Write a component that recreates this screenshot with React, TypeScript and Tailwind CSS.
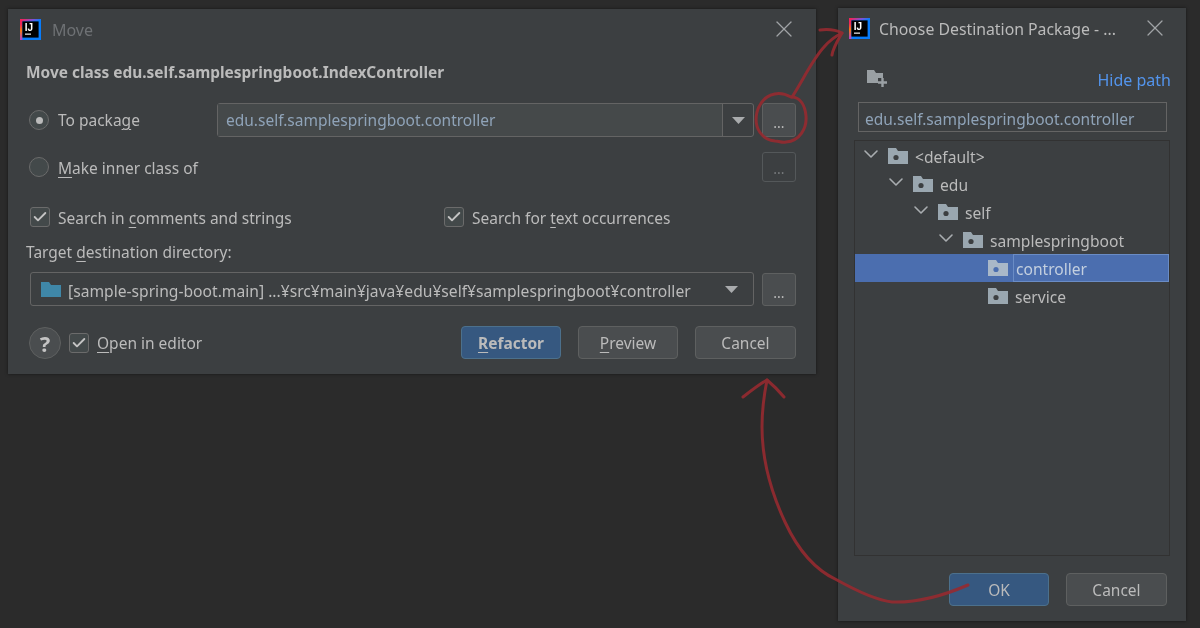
import React from "react";
import { X, ChevronDown, Check } from "lucide-react";

function Logo() {
  return (
    <svg width="21" height="21" viewBox="0 0 21 21" className="shrink-0">
      <defs>
        <linearGradient id="ij1" x1="0" y1="0" x2="1" y2="0.25">
          <stop offset="0.15" stopColor="#f0245c" />
          <stop offset="0.65" stopColor="#7a52d8" />
          <stop offset="1" stopColor="#087cfa" />
        </linearGradient>
        <linearGradient id="ij2" x1="0" y1="0" x2="0" y2="1">
          <stop offset="0.25" stopColor="#f0245c" />
          <stop offset="0.55" stopColor="#f97a12" />
          <stop offset="1" stopColor="#b43fd0" />
        </linearGradient>
      </defs>
      <rect width="21" height="21" fill="#087cfa" />
      <rect width="21" height="2.4" fill="url(#ij1)" />
      <rect width="2.4" height="21" fill="url(#ij2)" />
      <rect x="2.400" y="2.400" width="16.200" height="16.200" fill="#000" />
      <text x="4.800" y="12" fontSize="10" fontWeight="700" fill="#fff" fontFamily="Liberation Sans, sans-serif">IJ</text>
      <rect x="5" y="14.500" width="6" height="1.300" fill="#ddd" />
    </svg>
  );
}

function Mn({ children }: { children: React.ReactNode }) {
  return <span className="underline decoration-1 underline-offset-[3px]">{children}</span>;
}

function MiniBtn({ off, h, pb }: { off?: boolean; h: string; pb: string }) {
  return (
    <div
      className={`w-[34px] ${h} ${pb} shrink-0 rounded-[3px] border flex items-end justify-center text-[14px] leading-[14px] ${
        off ? "border-[#54585a] text-[#777a7c]" : "border-[#5e6060] bg-[#4a4d4f] text-[#bbbbbb]"
      }`}
    >
      ...
    </div>
  );
}

function Tick({ className }: { className?: string }) {
  return (
    <div className={`w-[20px] h-[20px] shrink-0 rounded-[3px] border border-[#6b6b6b] bg-[#43494a] flex items-center justify-center ${className ?? ""}`}>
      <Check size={16} strokeWidth={2.8} color="#c4c4c4" />
    </div>
  );
}

function Btn({ children, primary, wide }: { children: React.ReactNode; primary?: boolean; wide?: boolean }) {
  return (
    <div
      className={`h-[33px] ${wide ? "w-[101px]" : "w-[100px]"} shrink-0 rounded-[4px] border flex items-center justify-center ${
        primary ? "bg-[#365880] border-[#4c708c] text-[#bbbbbb]" : "bg-[#4a4d4f] border-[#5e6060] text-[#bbbbbb]"
      }`}
    >
      {children}
    </div>
  );
}

function Caret() {
  return (
    <svg width="13" height="7" viewBox="0 0 13 7">
      <path d="M0 0H13L6.500 7Z" fill="#a9abad" />
    </svg>
  );
}

function Pkg({ light }: { light?: boolean }) {
  const c = light ? "#a9b8c8" : "#9aa7b0";
  const d = light ? "#4b6eaf" : "#3c3f41";
  return (
    <svg width="20" height="16" viewBox="0 0 20 16" className="shrink-0">
      <path d="M0 0H8L10 3H20V16H0Z" fill={c} />
      <circle cx="8" cy="9.500" r="2.600" fill={d} />
    </svg>
  );
}

function FolderBlue() {
  return (
    <svg width="20" height="15" viewBox="0 0 20 15" className="shrink-0">
      <path d="M0 0H8L10 3H20V15H0Z" fill="#3f87a8" />
    </svg>
  );
}

function NewFolder() {
  return (
    <svg width="20" height="17" viewBox="0 0 20 17" className="mb-[3px]">
      <path d="M0 0H7L9 3H16V8H11V13H0Z" fill="#9aa0a4" />
      <path d="M15.500 8V17M11 12.500H20" stroke="#9aa0a4" strokeWidth="2.400" fill="none" />
    </svg>
  );
}

function TreeRow({ depth, label, open, selected }: { depth: number; label: string; open?: boolean; selected?: boolean }) {
  const pads = ["pl-[9px]", "pl-[34px]", "pl-[59px]", "pl-[84px]", "pl-[109px]"];
  return (
    <div className={`h-[28px] flex items-center ${pads[depth]} ${selected ? "bg-[#4b6eaf]" : ""}`}>
      <div className="w-[24px] shrink-0 flex items-center -mt-[4px]">
        {open && <ChevronDown className="-ml-[5px]" size={24} strokeWidth={1.6} color="#a9adb0" />}
      </div>
      <div className="-mt-[1px] flex items-center">
        <Pkg light={selected} />
      </div>
      <span
        className={`ml-[5px] pl-[2px] h-full flex items-center pt-[1px] ${
          selected ? "flex-1 border border-[#6a8cc5] text-[#c3cfdf]" : "text-[#bbbbbb]"
        }`}
      >
        {label}
      </span>
    </div>
  );
}

function Annotations() {
  return (
    <svg className="absolute inset-0 pointer-events-none" width="1200" height="628" viewBox="0 0 1200 628" fill="none">
      <g stroke="#962a30" strokeWidth="3" strokeLinecap="round" strokeLinejoin="round" opacity="0.9">
        <path d="M791 97C777 89 762 95 757 112C753 129 763 140 775 141C780 141 781 143 786 142C800 141 807 128 806 116C805 105 800 97 791 97Z" />
        <path d="M792 97C802 82 812 60 824 47C830 40 836 36 842 33" />
        <path d="M820 30C828 29 836 30 842 33C838 40 833 48 832 55" />
        <path d="M968 585C945 595 920 603 892 602C875 600 855 590 837 580C815 570 797 548 785 522C771 492 762 460 762 427C762 405 765 390 767 380" />
        <path d="M743 397C752 390 760 384 767 380C773 385 779 391 784 397" />
      </g>
    </svg>
  );
}

export default function App() {
  return (
    <div
      className="relative w-[1200px] h-[628px] overflow-hidden bg-[#2b2b2b] text-[15.500px] leading-[22px] text-[#bbbbbb] flex items-start blur-[0.4px]"
      style={{ fontFamily: '"Noto Sans", sans-serif' }}
    >
      {/* Move dialog */}
      <div className="ml-[8px] mt-[9px] w-[808px] h-[365px] bg-[#3c3f41] shrink-0 flex flex-col shadow-[0_0_3px_rgba(0,0,0,0.5)]">
        <div className="h-[40px] flex items-center pl-[12px] pr-[18px]">
          <Logo />
          <span className="ml-[11px] text-[16px] text-[#6e7174] pt-[1px]">Move</span>
          <X className="ml-auto -mt-[1px]" size={28} strokeWidth={1.1} color="#a0a3a6" />
        </div>
        <div className="pl-[18px] mt-[12px] font-bold text-[15.450px] h-[22px] flex items-center">
          Move class edu.self.samplespringboot.IndexController
        </div>
        <div className="flex items-center mt-[20px] pl-[21px] pr-[20px] h-[34px]">
          <div className="w-[20px] h-[20px] rounded-full border border-[#6b6b6b] bg-[#43494a] flex items-center justify-center shrink-0">
            <div className="w-[7px] h-[7px] rounded-full bg-[#bbbbbb]" />
          </div>
          <span className="ml-[9px] w-[159px]">
            To packa<Mn>g</Mn>e
          </span>
          <div className="w-[537px] h-[34px] rounded-[3px] border border-[#646464] flex items-stretch">
            <div className="flex-1 bg-[#45494a] pl-[8px] flex items-center text-[#8fa3b8]">edu.self.samplespringboot.controller</div>
            <div className="w-[31px] border-l border-[#646464] flex items-center justify-center">
              <Caret />
            </div>
          </div>
          <div className="ml-[8px]">
            <MiniBtn h="h-[34px]" pb="pb-[6px]" />
          </div>
        </div>
        <div className="flex items-center mt-[15px] pl-[21px] pr-[20px] h-[30px]">
          <div className="w-[20px] h-[20px] rounded-full border border-[#6b6b6b] bg-[#43494a] shrink-0" />
          <span className="ml-[9px] pt-[2px]">
            <Mn>M</Mn>ake inner class of
          </span>
          <div className="ml-auto">
            <MiniBtn off h="h-[30px]" pb="pb-[5px]" />
          </div>
        </div>
        <div className="flex items-center mt-[24px] pl-[22px] h-[22px]">
          <Tick />
          <span className="ml-[8px] w-[386px] pt-[1px]">
            Search in <Mn>c</Mn>omments and strings
          </span>
          <Tick />
          <span className="ml-[8px] pt-[1px]">
            Search for <Mn>t</Mn>ext occurrences
          </span>
        </div>
        <div className="pl-[18px] mt-[13px] h-[22px]">
          Target <Mn>d</Mn>estination directory:
        </div>
        <div className="flex items-center mt-[9px] pl-[22px] pr-[20px]">
          <div className="w-[724px] h-[34px] rounded-[3px] border border-[#646464] flex items-center pl-[10px] pr-[15px]">
            <FolderBlue />
            <span className="ml-[7px] text-[15.650px] text-[#bbbbbb] pt-[3px]">
              [sample-spring-boot.main] ...¥src¥main¥java¥edu¥self¥samplespringboot¥controller
            </span>
            <div className="ml-auto">
              <Caret />
            </div>
          </div>
          <div className="ml-[8px]">
            <MiniBtn h="h-[33px]" pb="pb-[5px]" />
          </div>
        </div>
        <div className="flex items-center mt-[20px] pl-[21px] pr-[20px]">
          <div className="w-[32px] h-[32px] rounded-full border border-[#5e6060] bg-[#4a4d4f] flex items-center justify-center font-bold text-[22px] text-[#c4c4c4] shrink-0">
            ?
          </div>
          <Tick className="ml-[8px]" />
          <span className="ml-[8px]">
            <Mn>O</Mn>pen in editor
          </span>
          <div className="ml-auto flex gap-[17px]">
            <Btn primary>
              <b className="font-bold">
                <Mn>R</Mn>efactor
              </b>
            </Btn>
            <Btn>
              <span>
                <Mn>P</Mn>review
              </span>
            </Btn>
            <Btn wide>Cancel</Btn>
          </div>
        </div>
      </div>

      {/* Choose Destination Package dialog */}
      <div className="ml-[22px] mt-[8px] w-[348px] h-[613px] bg-[#3c3f41] shrink-0 flex flex-col shadow-[0_0_3px_rgba(0,0,0,0.5)]">
        <div className="h-[40px] flex items-center pl-[11px] pr-[17px]">
          <Logo />
          <span className="ml-[9px] text-[15.800px] pt-[2px]">Choose Destination Package - ...</span>
          <X className="ml-auto -mt-[1px]" size={28} strokeWidth={1.1} color="#a0a3a6" />
        </div>
        <div className="flex items-end pl-[29px] pr-[15px] h-[42px]">
          <NewFolder />
          <span className="ml-auto text-[16px] text-[#5394ec] -mb-[1px]">Hide path</span>
        </div>
        <div className="mt-[12px] ml-[20px] w-[309px] h-[30px] border border-[#646464] flex items-center pl-[6px] pt-[3px] text-[#8fa3b8]">
          edu.self.samplespringboot.controller
        </div>
        <div className="mt-[8px] ml-[16px] w-[316px] h-[416px] border border-[#323232] pt-[1px] text-[15.600px]">
          <TreeRow depth={0} label="<default>" open />
          <TreeRow depth={1} label="edu" open />
          <TreeRow depth={2} label="self" open />
          <TreeRow depth={3} label="samplespringboot" open />
          <TreeRow depth={4} label="controller" selected />
          <TreeRow depth={4} label="service" />
        </div>
        <div className="mt-[17px] flex justify-end gap-[17px] pr-[19px]">
          <Btn primary>OK</Btn>
          <Btn wide>Cancel</Btn>
        </div>
      </div>

      <Annotations />
    </div>
  );
}
